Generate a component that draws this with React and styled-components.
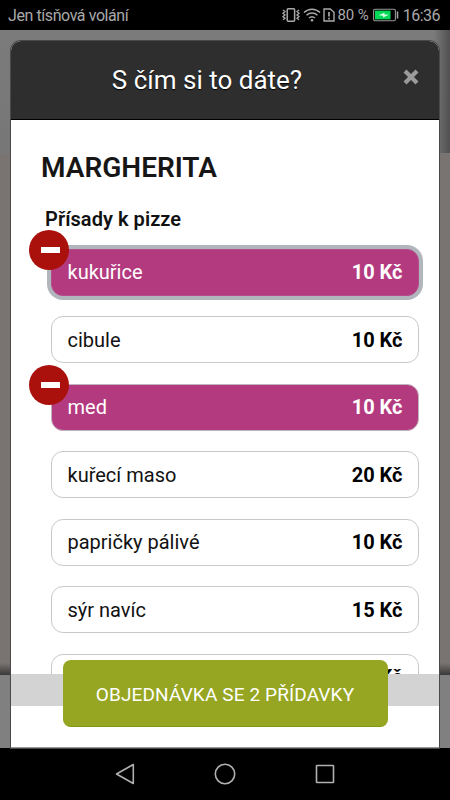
import React from 'react';
import styled, {createGlobalStyle, css} from 'styled-components';

const GlobalStyle = createGlobalStyle`
  * {
    box-sizing: border-box;
  }

  body {
    margin: 0;
    background: #000;
    font-family: Roboto, 'Noto Sans', sans-serif;
  }

  button {
    font-family: inherit;
  }
`;

const Phone = styled.div`
  display: flex;
  flex-direction: column;
  width: 450px;
  height: 800px;
  overflow: hidden;
  background: #000;
`;

const StatusBar = styled.header`
  display: flex;
  flex: none;
  justify-content: space-between;
  align-items: center;
  height: 30px;
  padding: 0 10px 0 8px;
  color: #a9a9a9;
  font-size: 16px;
  white-space: nowrap;
`;

const StatusIcons = styled.div`
  display: flex;
  align-items: center;

  svg {
    display: block;
  }
`;

const Carrier = styled.span`
  padding-top: 1px;
  letter-spacing: -0.42px;
`;

const Battery = styled.span`
  margin: 0 4px 0 2px;
  font-size: 15px;
  letter-spacing: -0.1px;
`;

const Clock = styled.span`
  margin-left: 4px;
  padding-top: 1px;
  font-size: 16px;
  letter-spacing: -0.5px;
`;

const Backdrop = styled.main`
  display: flex;
  flex: none;
  height: 718px;
  padding: 11px 11px 0;
  background:
    linear-gradient(#808080, #808080) 0 645px / 100% 73px no-repeat,
    linear-gradient(to bottom, rgba(50, 48, 47, 0), #3a3838) 0 633px / 100% 12px no-repeat,
    linear-gradient(to right, rgba(80, 80, 80, 0), #505050) 100% 0 / 16px 123px no-repeat,
    linear-gradient(#7b7b7b, #777 123px, #797472 124px);
`;

const Modal = styled.section`
  display: flex;
  flex: 1;
  flex-direction: column;
  background: #fff;
  border-radius: 10px 10px 0 0;
  border-bottom: 1px solid #999;
  box-shadow: 0 0 0 1px #4a4848;
`;

const ModalHeader = styled.div`
  display: grid;
  grid-template-columns: 56px 1fr 56px;
  flex: none;
  align-items: center;
  height: 79px;
  background: #2e2e2e;
  border-bottom: 1px solid #000;
  border-radius: 10px 10px 0 0;
`;

const Title = styled.h1`
  grid-column: 2;
  margin: 0 -8px;
  color: #fff;
  font-size: 26px;
  font-weight: 400;
  text-align: center;
  text-shadow: 0 1px 1px #000;
  padding-right: 36px;
  white-space: nowrap;
`;

const CloseButton = styled.button`
  justify-self: center;
  margin: 0 0 7px;
  padding: 0;
  border: 0;
  background: none;

  svg {
    display: block;
  }
`;

const Options = styled.div`
  flex: none;
  height: 554px;
  padding: 30px 20px 0 30px;
  overflow: hidden;
`;

const ProductName = styled.h2`
  margin: 0;
  color: #161616;
  font-size: 28px;
  font-weight: 600;
  line-height: 36px;
`;

const GroupName = styled.h3`
  margin: 21px 0 0 4px;
  color: #111;
  font-size: 20px;
  font-weight: 600;
  letter-spacing: 0.05px;
  line-height: 24px;
`;

const ToppingList = styled.ul`
  display: flex;
  flex-direction: column;
  gap: 20.5px;
  margin: 17.6px 0 0;
  padding: 0 0 0 10px;
  list-style: none;
`;

const Topping = styled.li`
  position: relative;
  display: flex;
  flex: none;
  justify-content: space-between;
  align-items: center;
  height: 47px;
  padding: 0 15.5px 0 15.5px;
  border: 1px solid #c9c9cb;
  border-radius: 12px;
  color: #111;
  font-size: 20px;

  ${({$selected}) => $selected && css`
    background: #b43a80;
    border-color: #bfb4bb;
    color: #fff;
  `}

  ${({$focused}) => $focused && css`
    border-color: #b44c89;
    box-shadow: 0 0 0 4px #b0b6bb;
  `}
`;

const Price = styled.strong`
  margin-left: auto;
  color: ${({$selected}) => ($selected ? '#fff' : '#000')};
  font-weight: 700;
`;

const RemoveBadge = styled.span`
  position: absolute;
  top: -20px;
  left: -23px;
  display: flex;
  justify-content: center;
  align-items: center;
  width: 40px;
  height: 40px;
  border-radius: 50%;
  background: #aa110d;

  &::after {
    content: '';
    width: 19px;
    height: 6px;
    margin: 1px 0 0 2px;
    background: #fff;
  }
`;

const ModalFooter = styled.div`
  display: flex;
  flex: 1;
  justify-content: center;
  align-items: flex-start;
  background: linear-gradient(#d3d3d3, #d3d3d3) 0 0 / 100% 32px no-repeat;
`;

const OrderButton = styled.button`
  position: relative;
  width: 325px;
  height: 67px;
  margin-top: -14px;
  padding: 2px 0 0;
  border: 0;
  border-bottom: 1px solid #86980f;
  border-radius: 8px;
  background: #96a622;
  color: #fff;
  font-size: 19px;
  letter-spacing: 0.12px;
  white-space: nowrap;
`;

const NavBar = styled.nav`
  display: flex;
  flex: 1;
  justify-content: center;
  align-items: center;
  gap: 76px;

  svg {
    display: block;
  }
`;

const toppings = [
  {name: 'kukuřice', price: 10, selected: true, focused: true},
  {name: 'cibule', price: 10},
  {name: 'med', price: 10, selected: true},
  {name: 'kuřecí maso', price: 20},
  {name: 'papričky pálivé', price: 10},
  {name: 'sýr navíc', price: 15},
  {name: '', price: 10},
];

function VibrateIcon() {
  return (
    <svg width="21" height="16" viewBox="0 0 21 16" fill="none" stroke="#a9a9a9">
      <rect x="5.2" y="1.8" width="7.4" height="12.4" rx="1" strokeWidth="1.5" />
      <path d="M1 3l2 1.6L1 6.3l2 1.6-2 1.7 2 1.6-2 1.5M17 3l-2 1.6 2 1.7-2 1.6 2 1.7-2 1.6 2 1.5" strokeWidth="1.3" />
    </svg>
  );
}

function WifiIcon() {
  return (
    <svg width="20" height="16" viewBox="0 0 20 16" fill="none" stroke="#a9a9a9" strokeWidth="1.5">
      <path d="M1 5.5c4.5-4.4 11.5-4.4 16 0M3.5 8.3c3.2-3 7.8-3 11 0M6 11c1.8-1.6 4.2-1.6 6 0" />
      <circle cx="9" cy="13.3" r="1.3" fill="#a9a9a9" stroke="none" />
    </svg>
  );
}

function SimAlertIcon() {
  return (
    <svg width="12" height="16" viewBox="0 0 12 16" fill="none" stroke="#a9a9a9" strokeWidth="1.4">
      <path d="M1 2h6.3L11 5.2V14H1z" />
      <path d="M6 5v4.5M6 10.7v1.8" strokeWidth="1.7" />
    </svg>
  );
}

function BatteryIcon() {
  return (
    <svg width="26" height="14" viewBox="0 0 26 14">
      <rect x="0.6" y="1.2" width="21.8" height="11.6" rx="1.5" fill="none" stroke="#989898" strokeWidth="1.1" />
      <rect x="2" y="2.6" width="15.5" height="8.8" fill="#04da57" />
      <path d="M5.5 7.3l6-2.5v1.7l4.5.3-6 2.7V7.7z" fill="#d8ffe5" />
      <path d="M24.5 3.5v7" stroke="#a9a9a9" strokeWidth="1.5" />
    </svg>
  );
}

function App() {
  const selectedCount = toppings.filter((topping) => topping.selected).length;

  return (
    <Phone>
      <GlobalStyle />
      <StatusBar>
        <Carrier>Jen tísňová volání</Carrier>
        <StatusIcons>
          <VibrateIcon />
          <WifiIcon />
          <SimAlertIcon />
          <Battery>80 %</Battery>
          <BatteryIcon />
          <Clock>16:36</Clock>
        </StatusIcons>
      </StatusBar>

      <Backdrop>
        <Modal>
          <ModalHeader>
            <Title>S čím si to dáte?</Title>
            <CloseButton aria-label="Zavřít">
              <svg width="16" height="16" viewBox="0 0 16 16" stroke="#9b9b9b" strokeWidth="4.2" strokeLinecap="square">
                <path d="M3.5 3.5l9 9M12.5 3.5l-9 9" />
              </svg>
            </CloseButton>
          </ModalHeader>

          <Options>
            <ProductName>MARGHERITA</ProductName>
            <GroupName>Přísady k pizze</GroupName>
            <ToppingList>
              {toppings.map(({name, price, selected, focused}) => (
                <Topping key={name} $selected={selected} $focused={focused}>
                  {selected && <RemoveBadge />}
                  {name && <span>{name}</span>}
                  <Price $selected={selected}>{price} Kč</Price>
                </Topping>
              ))}
            </ToppingList>
          </Options>

          <ModalFooter>
            <OrderButton>OBJEDNÁVKA SE {selectedCount} PŘÍDAVKY</OrderButton>
          </ModalFooter>
        </Modal>
      </Backdrop>

      <NavBar>
        <svg width="24" height="24" viewBox="0 0 24 24" fill="none" stroke="#b0b0b0" strokeWidth="1.6" strokeLinejoin="round">
          <path d="M20.3 2.5v19L3.5 12z" />
        </svg>
        <svg width="24" height="24" viewBox="0 0 24 24" fill="none" stroke="#b0b0b0" strokeWidth="1.6">
          <circle cx="12" cy="12" r="9.7" />
        </svg>
        <svg width="24" height="24" viewBox="0 0 24 24" fill="none" stroke="#b0b0b0" strokeWidth="1.6">
          <rect x="3.5" y="3.5" width="17" height="17" rx="0.5" />
        </svg>
      </NavBar>
    </Phone>
  );
}

export default App;
